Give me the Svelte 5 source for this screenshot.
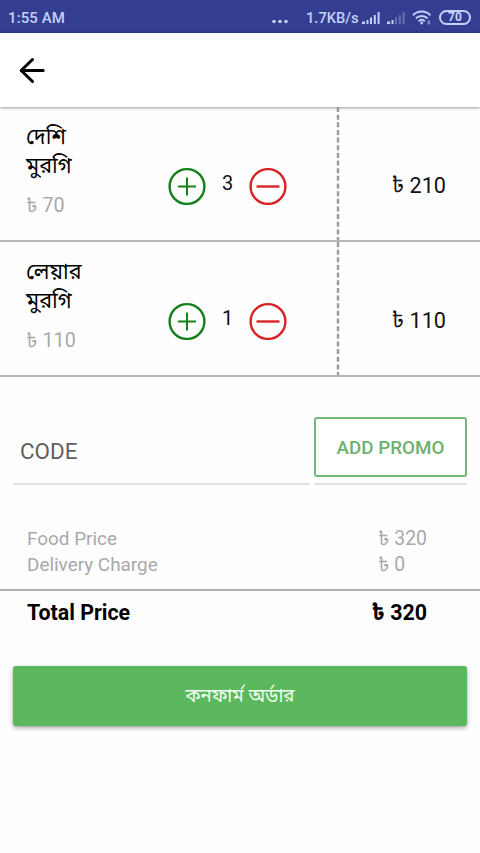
<script lang="ts">
	interface Item {
		id: number
		name: string[]
		price: number
		quantity: number
	}

	let items: Item[] = $state([
		{ id: 1, name: ['দেশি', 'মুরগি'], price: 70, quantity: 3 },
		{ id: 2, name: ['লেয়ার', 'মুরগি'], price: 110, quantity: 1 }
	])
	let code = $state('')
	const deliveryCharge = 0
	let foodPrice = $derived(items.reduce((sum, item) => sum + item.price * item.quantity, 0))

	function increase(item: Item) {
		item.quantity += 1
	}

	function decrease(item: Item) {
		if (item.quantity > 0) item.quantity -= 1
	}
</script>

<div class="page">
	<div class="status">
		<span class="status__time">1:55 AM</span>
		<svg class="status__dots" width="16" height="5" viewBox="0 0 16 5" fill="currentColor">
			<circle cx="2" cy="2.5" r="1.8" />
			<circle cx="8" cy="2.5" r="1.8" />
			<circle cx="14" cy="2.5" r="1.8" />
		</svg>
		<span class="status__speed">1.7KB/s</span>
		<svg class="status__signal" width="18" height="14" viewBox="0 0 18 14" fill="currentColor">
			<path d="M0 10.5h3V13H0zM4.5 9h2v4h-2zM8 6.5h2V13H8zM11.8 4h2v9h-2zM15.6 1h2v12h-2z" />
		</svg>
		<svg class="status__signal second" width="18" height="14" viewBox="0 0 18 14" fill="currentColor">
			<path d="M0 10.5h3V13H0zM4.5 9h2v4h-2z" />
			<path opacity="0.35" d="M8 6.5h2V13H8zM11.8 4h2v9h-2zM15.6 1h2v12h-2z" />
		</svg>
		<svg class="status__wifi" width="20" height="15" viewBox="0 0 20 15" fill="none" stroke="currentColor" stroke-width="2">
			<path d="M1 5.2C6 0.4 13.4 0.4 18.4 5.2M3.8 8.3c3.4-3.2 8.4-3.2 11.8 0M6.6 11.2c1.8-1.6 4.4-1.6 6.2 0" />
			<circle cx="9.7" cy="13" r="1.4" fill="currentColor" stroke="none" />
			<path d="M16.8 10.5v4" opacity="0.6" />
		</svg>
		<span class="status__battery"><span>70</span></span>
	</div>

	<header class="header">
		<button class="back" aria-label="Back">
			<svg width="28" height="28" viewBox="0 0 28 28" fill="none" stroke="#000" stroke-width="3" stroke-linecap="round" stroke-linejoin="round">
				<path d="M14.5 3.5 3.2 14.5l11.3 11M3.2 14.5h22" />
			</svg>
		</button>
	</header>

	{#each items as item (item.id)}
		<div class="item">
			<div class="item__info">
				<div class="item__name">
					{#each item.name as word}
						<div>{word}</div>
					{/each}
				</div>
				<div class="item__price">৳ {item.price}</div>
			</div>
			<div class="item__counter">
				<button aria-label="Add" onclick={() => increase(item)}>
					<svg width="38" height="38" viewBox="0 0 38 38" fill="none" stroke="#14801c" stroke-width="2.4">
						<circle cx="19" cy="19.5" r="17.4" />
						<path d="M10 19.5h18M19 10.5v18" stroke-width="2" />
					</svg>
				</button>
				<span class="item__quantity">{item.quantity}</span>
				<button aria-label="Remove" onclick={() => decrease(item)}>
					<svg width="38" height="38" viewBox="0 0 38 38" fill="none" stroke="#d92226" stroke-width="2.4">
						<circle cx="19" cy="19.5" r="17.4" />
						<path d="M7.5 19.5h23" />
					</svg>
				</button>
			</div>
			<svg class="item__divider" width="4" height="133">
				<path d="M2 0v133" stroke="#999" stroke-width="2.4" stroke-dasharray="5 2.65" />
			</svg>
			<div class="item__total">৳ {item.price * item.quantity}</div>
		</div>
	{/each}

	<div class="promo">
		<div class="promo__field">
			<input type="text" placeholder="CODE" bind:value={code} />
		</div>
		<div class="promo__action">
			<button>ADD PROMO</button>
		</div>
	</div>

	<div class="summary">
		<div class="summary__row">
			<span>Food Price</span>
			<span class="summary__value">৳ {foodPrice}</span>
		</div>
		<div class="summary__row">
			<span>Delivery Charge</span>
			<span class="summary__value">৳ {deliveryCharge}</span>
		</div>
	</div>
	<div class="total">
		<span>Total Price</span>
		<span class="total__value">৳ {foodPrice + deliveryCharge}</span>
	</div>

	<button class="confirm">কনফার্ম অর্ডার</button>
</div>

<style>
	:global(body) {
		background: #fefefe;
	}

	.page {
		width: 480px;
		height: 853px;
		overflow: hidden;
		background: #fefefe;
		font-family: Roboto, "Noto Sans Bengali", "Noto Sans", sans-serif;
		font-size: 20px;
		color: #111;
	}

	button {
		padding: 0;
		border: 0;
		background: none;
		font-family: inherit;
		cursor: pointer;
	}

	svg {
		display: block;
		flex: none;
	}

	.status {
		display: flex;
		align-items: center;
		box-sizing: border-box;
		height: 33px;
		padding: 2px 9px 0 8px;
		background: #343e90;
		color: #c5d0fa;
		font-size: 15px;
		font-weight: 500;
	}

	.status__time {
		letter-spacing: 0.1px;
	}

	.status__dots {
		margin: 7px 18px 0 auto;
	}

	.status__speed {
		width: 53px;
		font-size: 14.7px;
		white-space: nowrap;
	}

	.status__signal {
		margin-left: 3px;
	}

	.status__signal.second {
		margin-left: 7px;
	}

	.status__wifi {
		margin: 0 7px 0 7px;
	}

	.status__battery {
		display: flex;
		align-items: center;
		justify-content: center;
		box-sizing: border-box;
		width: 32px;
		height: 15px;
		border: 2px solid #c5d0fa;
		border-radius: 8px;
		font-size: 12px;
		font-weight: 700;
		line-height: 11px;
	}

	.header {
		display: flex;
		align-items: center;
		box-sizing: border-box;
		height: 74px;
		padding-left: 18px;
		background: #fff;
		box-shadow: 0 1px 3px rgba(0, 0, 0, 0.4);
	}

	.item {
		display: flex;
		box-sizing: border-box;
		height: 135px;
		border-bottom: 2px solid #b5b5b5;
	}

	.item__info {
		width: 168px;
		box-sizing: border-box;
		padding: 15px 0 0 26px;
	}

	.item__name {
		font-size: 21.5px;
		line-height: 29px;
		color: #000;
	}

	.item__price {
		margin-top: 11px;
		font-size: 19.7px;
		line-height: 29px;
		color: #a9a9a9;
	}

	.item__counter {
		display: flex;
		width: 168px;
		padding-top: 60px;
	}

	.item__quantity {
		width: 43px;
		line-height: 32px;
		text-align: center;
	}

	.item__counter button {
		width: 38px;
		height: 38px;
	}

	.item__total {
		flex: 1;
		padding: 64px 34px 0 0;
		font-size: 21.6px;
		line-height: 30px;
		text-align: right;
	}

	.promo {
		display: flex;
		gap: 4px;
		padding: 40px 13px 0;
	}

	.promo__field {
		width: 297px;
		border-bottom: 2px solid #e2e2e2;
	}

	.promo__field input {
		box-sizing: border-box;
		width: 100%;
		height: 66px;
		padding: 2px 7px 0;
		border: 0;
		outline: 0;
		background: none;
		font-family: inherit;
		font-size: 22.4px;
	}

	.promo__field input::placeholder {
		color: #606060;
		opacity: 1;
	}

	.promo__action {
		flex: 1;
		height: 66px;
		border-bottom: 2px solid #e2e2e2;
	}

	.promo__action button {
		box-sizing: border-box;
		width: 100%;
		height: 60px;
		padding-top: 1px;
		border: 2px solid #75b77a;
		border-radius: 3px;
		background: #fff;
		color: #6db16f;
		font-size: 18.8px;
		font-weight: 500;
	}

	.summary {
		padding: 41px 0 12px 27px;
		border-bottom: 2px solid #b0b0b0;
		color: #a9a9a9;
		font-size: 18.9px;
		line-height: 25.5px;
	}

	.summary__row {
		display: flex;
		height: 25.5px;
	}

	.summary__row span:first-child {
		width: 351px;
	}

	.summary__value {
		font-size: 19.4px;
	}

	.total {
		display: flex;
		justify-content: space-between;
		height: 44px;
		padding: 0 53px 0 27px;
		color: #000;
		font-size: 21.4px;
		font-weight: 700;
		line-height: 43px;
	}

	.confirm {
		display: block;
		width: 454px;
		height: 60px;
		margin: 31px 13px 0;
		padding-top: 3px;
		border-radius: 3px;
		background: #5cb85c;
		box-shadow: 0 2px 4px rgba(0, 0, 0, 0.35);
		color: #f1fff0;
		font-size: 18.7px;
	}
</style>
